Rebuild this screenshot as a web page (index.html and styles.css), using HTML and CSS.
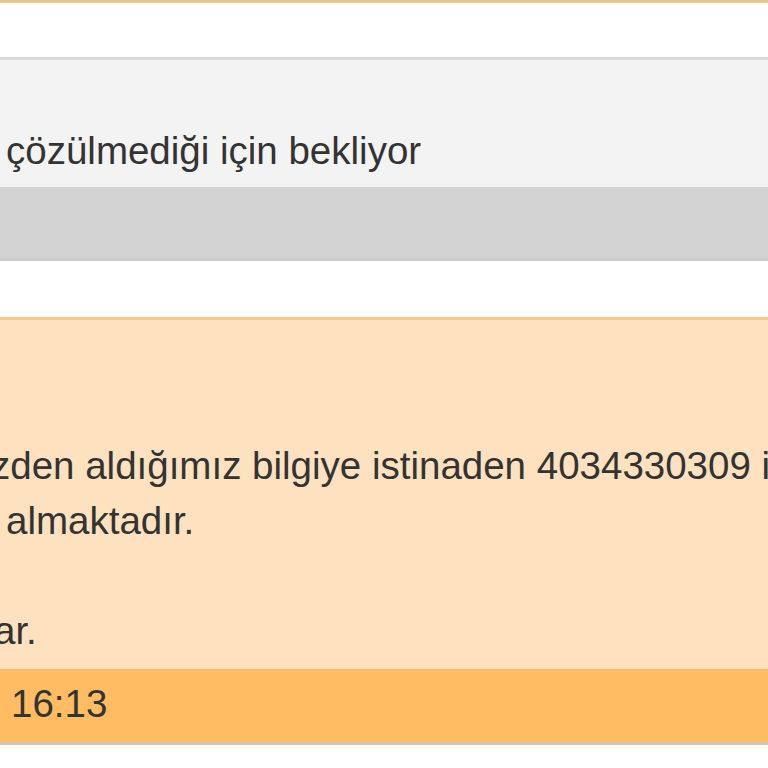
FILE: index.html
```html
<!DOCTYPE html>
<html lang="tr">
<head>
<meta charset="utf-8">
<title>Durum</title>
<link rel="stylesheet" href="styles.css">
</head>
<body>
<div class="page">
  <div class="prev-panel"></div>
  <section class="panel panel-grey">
    <div class="panel-body grey-body">
      <p class="line indent-7">çözülmediği için bekliyor</p>
    </div>
    <div class="panel-footer grey-footer"></div>
  </section>
  <section class="panel panel-warn">
    <div class="panel-body warn-body">
      <p class="line cut-z">zden aldığımız bilgiye istinaden 4034330309 işlemi</p>
      <p class="line indent-7">almaktadır.</p>
      <p class="line blank">&nbsp;</p>
      <p class="line cut-a">ar.</p>
    </div>
    <div class="panel-footer warn-footer">
      <p class="line indent-12">16:13</p>
    </div>
  </section>
</div>
</body>
</html>
```

FILE: styles.css
```css
html, body {
  margin: 0;
  padding: 0;
  background: #ffffff;
  overflow: hidden;
}

.page {
  width: 768px;
  height: 768px;
  overflow: hidden;
  font-family: "Liberation Sans", Arial, sans-serif;
  font-size: 38.5px;
  line-height: 55px;
  color: #333333;
}

.prev-panel {
  height: 0;
  border-bottom: 3px solid #e6c98e;
  margin-bottom: 54px;
}

.panel {
  width: 100%;
}

.line {
  margin: 0;
  white-space: nowrap;
  overflow: hidden;
}

.indent-7 { padding-left: 6px; }
.indent-12 { padding-left: 11px; }
.cut-z { text-indent: -9px; }
.cut-a { text-indent: -6px; }

.panel-grey {
  border-top: 3px solid #d9d9d9;
  border-bottom: 3px solid #cbcbcb;
  margin-bottom: 56px;
}

.grey-body {
  background: #f3f3f3;
  padding: 63px 0 9px;
}

.grey-footer {
  background: #d3d3d3;
  height: 71px;
}

.panel-warn {
  border-top: 3px solid #f7c688;
  border-bottom: 3px solid #d6c7a6;
}

.warn-body {
  background: #fee1bf;
  padding: 118px 0 11px;
}

.warn-footer {
  background: #ffbc63;
  padding: 7px 0 11px;
}
```
